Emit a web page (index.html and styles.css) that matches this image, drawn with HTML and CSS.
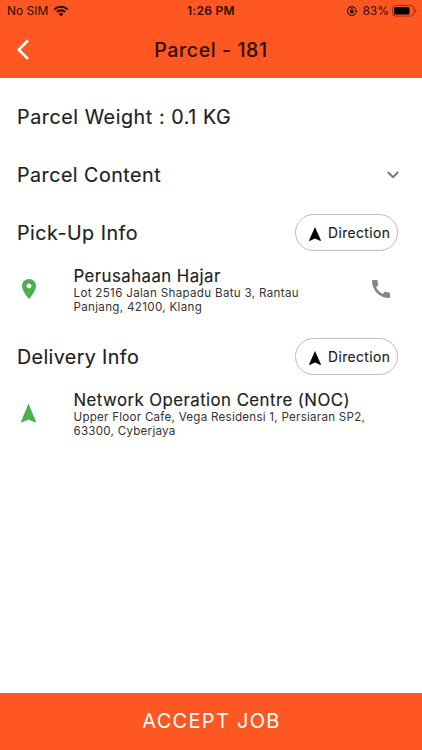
FILE: index.html
```html
<!DOCTYPE html>
<html lang="en">
<head>
<meta charset="utf-8">
<title>Parcel - 181</title>
<link rel="stylesheet" href="styles.css">
</head>
<body>
<div class="screen">
  <header class="top">
    <div class="status">
      <div class="carrier"><span class="nosim">No SIM</span>
        <svg class="wifi" viewBox="0 0 16 12"><path d="M1.400 4.500a9.400 9.400 0 0 1 13.200 0M3.800 7.100a6 6 0 0 1 8.400 0" fill="none" stroke="currentColor" stroke-width="2.100"/><path d="M8 11.600 5.500 9a3.500 3.500 0 0 1 5 0z" fill="currentColor"/></svg>
      </div>
      <span class="time">1:26 PM</span>
      <div class="power">
        <svg class="lock" viewBox="0 0 12 12"><path d="M9.700 8.200A4.400 4.400 0 1 1 9.800 4M10 4.500v2.500" fill="none" stroke="currentColor" stroke-width="1.100"/><path d="M8.600 6h3L10.100 8z" fill="currentColor"/><rect x="3.900" y="5.300" width="3.800" height="2.900" rx=".4" fill="currentColor"/><path d="M4.700 5.500v-.9a1.100 1.100 0 0 1 2.200 0v.9" fill="none" stroke="currentColor" stroke-width=".8"/></svg>
        <span class="percent">83%</span>
        <svg class="battery" viewBox="0 0 25 12"><rect x=".5" y=".5" width="21.400" height="10.600" rx="3" fill="none" stroke="currentColor" stroke-opacity=".4"/><rect x="2.100" y="2.100" width="15.400" height="7.400" rx="1.300" fill="currentColor"/><path d="M23.200 4v3.800q1.200-.5 1.200-1.900T23.200 4" fill="currentColor" opacity=".5"/></svg>
      </div>
    </div>
    <div class="nav">
      <svg class="back" viewBox="0 0 14 22"><path d="M12 1.500 2.700 10.700 12 19.900" fill="none" stroke="#fff" stroke-width="2.600"/></svg>
      <h1 class="title">Parcel - 181</h1>
    </div>
  </header>

  <main class="content">
    <section class="row"><h2 class="heading weight">Parcel Weight : 0.1 KG</h2></section>
    <section class="row">
      <h2 class="heading">Parcel Content</h2>
      <svg class="chevron" viewBox="0 0 12 8"><path d="M.8 1 6 6.200 11.200 1" fill="none" stroke="#757575" stroke-width="1.900"/></svg>
    </section>
    <section class="row">
      <h2 class="heading">Pick-Up Info</h2>
      <button class="direction"><svg class="arrow" viewBox="0 0 12 14"><path d="M6 0 12 13.400 11.400 14 6 11.600.6 14 0 13.400z" fill="currentColor"/></svg><span>Direction</span></button>
    </section>
    <section class="place">
      <svg class="pin" viewBox="5 2 14 20"><path d="M12 2C8.130 2 5 5.130 5 9c0 5.250 7 13 7 13s7-7.750 7-13c0-3.870-3.130-7-7-7zm0 9.500a2.500 2.500 0 0 1 0-5 2.500 2.500 0 0 1 0 5z" fill="currentColor"/></svg>
      <div class="details">
        <h3 class="name">Perusahaan Hajar</h3>
        <p class="address pickup">Lot 2516 Jalan Shapadu Batu 3, Rantau<br>Panjang, 42100, Klang</p>
      </div>
      <svg class="phone" viewBox="3 3 18 18"><path d="M20.010 15.380c-1.230 0-2.420-.2-3.530-.56-.35-.12-.74-.03-1.010.24l-1.570 1.970c-2.830-1.350-5.480-3.900-6.890-6.830l1.950-1.660c.27-.28.35-.67.24-1.020-.37-1.110-.56-2.300-.56-3.530 0-.54-.45-.99-.99-.99H4.190C3.650 3 3 3.240 3 3.990 3 13.280 10.730 21 20.010 21c.71 0 .99-.63.99-1.180v-3.450c0-.54-.45-.99-.99-.99z" fill="#858585"/></svg>
    </section>
    <section class="row">
      <h2 class="heading delivery">Delivery Info</h2>
      <button class="direction"><svg class="arrow" viewBox="0 0 12 14"><path d="M6 0 12 13.400 11.400 14 6 11.600.6 14 0 13.400z" fill="currentColor"/></svg><span>Direction</span></button>
    </section>
    <section class="place">
      <svg class="pin marker" viewBox="0 0 15 19"><path d="M7.500 0 15 18.300 14.300 19 7.500 16 .7 19 0 18.300z" fill="currentColor"/></svg>
      <div class="details">
        <h3 class="name">Network Operation Centre (NOC)</h3>
        <p class="address">Upper Floor Cafe, Vega Residensi 1, Persiaran SP2,<br>63300, Cyberjaya</p>
      </div>
    </section>
  </main>

  <button class="accept">ACCEPT JOB</button>
</div>
</body>
</html>
```
FILE: styles.css
```css
* { box-sizing: border-box; margin: 0; padding: 0; }
body { font-family: Inter, "Liberation Sans", sans-serif; color: #212121; background: #fff; }
button { border: 0; background: none; font: inherit; color: inherit; }
svg { display: block; flex: none; }
.screen { width: 422px; height: 750px; display: flex; flex-direction: column; }
.top { height: 77.500px; background: #ff5722; color: #2b0d04; }
.status { height: 21px; padding: 0 5px 0 7px; display: grid; grid-template-columns: 1fr auto 1fr; align-items: center; font-size: 12px; }
.carrier, .power { display: flex; align-items: center; }
.carrier { gap: 5px; }
.power { justify-content: flex-end; }
.wifi { width: 16px; height: 12px; }
.time { font-weight: 600; letter-spacing: .3px; margin-left: -2px; }
.lock { width: 12px; height: 12px; margin-right: 4px; }
.battery { width: 25px; height: 12px; margin-left: 3px; color: #000; }
.nav { height: 56px; display: grid; grid-template-columns: 60px 1fr 60px; align-items: center; }
.back { width: 14px; height: 22px; margin-left: 16px; margin-top: 1px; }
.title { text-align: center; font-size: 19.500px; font-weight: 500; letter-spacing: .6px; padding-top: 1px; }
.content { flex: 1; padding: 10px 24px 0 17px; }
.row { height: 58px; display: flex; align-items: center; justify-content: space-between; }
.heading { font-size: 19.700px; font-weight: 400; letter-spacing: .48px; -webkit-text-stroke: .15px; }
.weight { letter-spacing: .56px; }
.delivery { letter-spacing: .38px; }
.chevron { width: 12px; height: 8px; margin-right: -1px; }
.direction { width: 103px; height: 37px; border: 1px solid #bdbdbd; border-radius: 19px; display: flex; align-items: center; padding-left: 13px; gap: 7px; font-size: 13.800px; letter-spacing: .42px; -webkit-text-stroke: .15px; }
.arrow { width: 12px; height: 14px; color: #000; margin-top: 2px; }
.place { height: 66px; padding-right: 8px; display: flex; align-items: flex-start; }
.pin { width: 14px; height: 20px; margin: 17px 37.500px 0 5px; color: #4caf50; }
.marker { width: 15px; margin-right: 37.500px; margin-left: 4px; }
.details { flex: 1; padding-top: 4px; }
.name { font-size: 16.800px; line-height: 21px; margin-bottom: -1px; font-weight: 400; letter-spacing: .45px; white-space: nowrap; -webkit-text-stroke: .15px; }
.address { font-size: 11.600px; line-height: 14px; letter-spacing: .25px; color: #333; white-space: nowrap; }
.address.pickup { letter-spacing: .32px; }
.phone { width: 18px; height: 18px; margin-top: 18px; }
.accept { height: 57.500px; background: #ff5722; color: #fff; font-size: 20px; letter-spacing: 1.300px; padding-left: 1px; }
```
